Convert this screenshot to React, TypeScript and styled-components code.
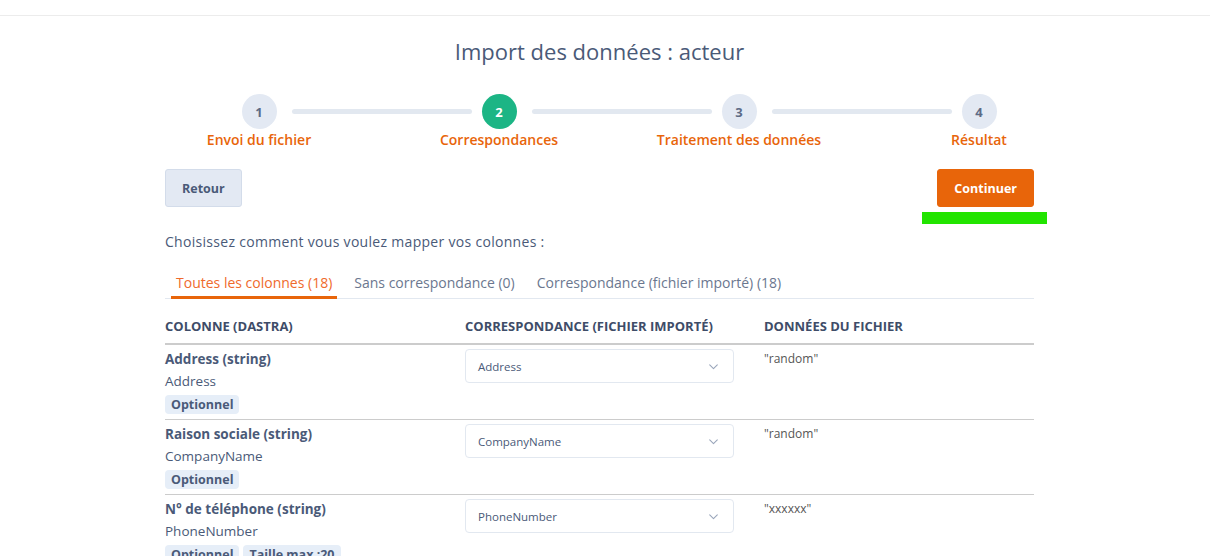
import React from 'react'
import styled, { createGlobalStyle } from 'styled-components'

const GlobalStyle = createGlobalStyle`
  * { box-sizing: border-box; }
  html, body { margin: 0; padding: 0; background: #fff; }
  body {
    font-family: "Open Sans", "Noto Sans", sans-serif;
    color: #4a5a78;
    overflow: hidden;
  }
`

const colors = {
  text: '#4a5a78',
  heading: '#3e4c68',
  orange: '#e8650a',
  tabOrange: '#ef6a2c',
  green: '#1cb585',
  muted: '#e3e9f3',
  border: '#cccccc',
  light: '#e2e8f0',
}

const TopBar = styled.div`
  height: 16px;
  border-bottom: 1px solid #ececec;
`

const Page = styled.main`
  width: 869px;
  margin-left: 165px;
  padding-top: 21px;
`

const Title = styled.h1`
  margin: 0;
  text-align: center;
  font-size: 22px;
  font-weight: 400;
  line-height: 28px;
  color: ${colors.text};
`

const Stepper = styled.ol`
  list-style: none;
  margin: 29px 0 0 -26px;
  padding: 0;
  display: grid;
  grid-template-columns: repeat(4, 240px);
`

const Step = styled.li<{ $last?: boolean }>`
  position: relative;
  display: flex;
  flex-direction: column;
  align-items: center;

  &::after {
    content: '';
    display: ${({ $last }) => ($last ? 'none' : 'block')};
    position: absolute;
    top: 15px;
    left: 153px;
    width: 180px;
    height: 5px;
    border-radius: 3px;
    background: ${colors.light};
  }
`

const Circle = styled.span<{ $active?: boolean }>`
  width: 35px;
  height: 35px;
  border-radius: 50%;
  display: flex;
  align-items: center;
  justify-content: center;
  font-size: 13px;
  font-weight: 700;
  background: ${({ $active }) => ($active ? colors.green : colors.muted)};
  color: ${({ $active }) => ($active ? '#fff' : '#5d6b86')};
`

const StepLabel = styled.span`
  margin-top: 1px;
  font-size: 14px;
  font-weight: 600;
  line-height: 20px;
  color: ${colors.orange};
  white-space: nowrap;
`

const Actions = styled.div`
  display: flex;
  justify-content: space-between;
  align-items: flex-start;
  margin-top: 19px;
`

const Button = styled.button<{ $primary?: boolean }>`
  height: 38px;
  padding: 0 16px;
  border-radius: 3px;
  font-family: inherit;
  font-size: 12.5px;
  font-weight: 700;
  cursor: pointer;
  border: 1px solid ${({ $primary }) => ($primary ? colors.orange : '#d3dcea')};
  background: ${({ $primary }) => ($primary ? colors.orange : colors.muted)};
  color: ${({ $primary }) => ($primary ? '#fff' : colors.text)};
`

const PrimaryWrap = styled.div`
  position: relative;
`

const Highlight = styled.span`
  position: absolute;
  top: 43px;
  left: -15px;
  width: 125px;
  height: 12px;
  background: #22e400;
`

const Intro = styled.p`
  margin: 25px 0 0;
  font-size: 14px;
  letter-spacing: 0.3px;
  line-height: 20px;
  color: ${colors.text};
`

const Tabs = styled.div`
  display: flex;
  margin-top: 21px;
  border-bottom: 1px solid ${colors.light};
`

const Tab = styled.button<{ $active?: boolean }>`
  margin: 0 6px -1px;
  padding: 0 5px 3px;
  border: 0;
  background: none;
  font-family: inherit;
  font-size: 14px;
  line-height: 20px;
  cursor: pointer;
  color: ${({ $active }) => ($active ? colors.tabOrange : '#6b778f')};
  border-bottom: 3px solid ${({ $active }) => ($active ? colors.orange : 'transparent')};
`

const Table = styled.table`
  width: 100%;
  margin-top: 17px;
  border-collapse: collapse;
  table-layout: fixed;
`

const Th = styled.th<{ $w: number }>`
  width: ${({ $w }) => $w}px;
  padding: 0 0 7px;
  text-align: left;
  font-size: 13px;
  font-weight: 700;
  line-height: 20px;
  text-transform: uppercase;
  color: ${colors.heading};
  border-bottom: 2px solid ${colors.border};
`

const Tr = styled.tr`
  border-bottom: 1px solid ${colors.border};
`

const Td = styled.td`
  vertical-align: top;
  padding: 4px 0 5px;
`

const FieldName = styled.div`
  font-size: 13.5px;
  font-weight: 700;
  line-height: 20px;
  color: ${colors.text};
`

const FieldKey = styled.div`
  font-size: 13.5px;
  line-height: 24px;
  color: ${colors.text};
`

const Badges = styled.div`
  display: flex;
  gap: 4px;
  margin-top: 2px;
`

const Badge = styled.span`
  display: inline-block;
  padding: 0 6px;
  height: 19px;
  line-height: 19px;
  border-radius: 4px;
  background: #e6eef8;
  font-size: 12.5px;
  font-weight: 700;
  color: ${colors.text};
`

const Select = styled.div`
  width: 269px;
  height: 34px;
  display: flex;
  align-items: center;
  justify-content: space-between;
  padding: 0 13px 0 12px;
  border: 1px solid ${colors.light};
  border-radius: 4px;
  font-size: 11.5px;
  color: ${colors.text};
`

const DataValue = styled.div`
  font-size: 12px;
  line-height: 20px;
  color: #555;
`

const Chevron = () => (
  <svg width="13" height="13" viewBox="0 0 24 24" fill="none" stroke="#9aa6bb" strokeWidth="2" strokeLinecap="round" strokeLinejoin="round">
    <path d="M5 9l7 7 7-7" />
  </svg>
)

const steps = ['Envoi du fichier', 'Correspondances', 'Traitement des données', 'Résultat']

const rows = [
  { name: 'Address (string)', key: 'Address', badges: ['Optionnel'], value: '"random"' },
  { name: 'Raison sociale (string)', key: 'CompanyName', badges: ['Optionnel'], value: '"random"' },
  { name: 'N° de téléphone (string)', key: 'PhoneNumber', badges: ['Optionnel', 'Taille max :20'], value: '"xxxxxx"' },
]

export default function App() {
  return (
    <>
      <GlobalStyle />
      <TopBar />
      <Page>
        <Title>Import des données : acteur</Title>
        <Stepper>
          {steps.map((label, i) => (
            <Step key={label} $last={i === steps.length - 1}>
              <Circle $active={i === 1}>{i + 1}</Circle>
              <StepLabel>{label}</StepLabel>
            </Step>
          ))}
        </Stepper>
        <Actions>
          <Button>Retour</Button>
          <PrimaryWrap>
            <Button $primary>Continuer</Button>
            <Highlight />
          </PrimaryWrap>
        </Actions>
        <Intro>Choisissez comment vous voulez mapper vos colonnes :</Intro>
        <Tabs>
          <Tab $active>Toutes les colonnes (18)</Tab>
          <Tab>Sans correspondance (0)</Tab>
          <Tab>Correspondance (fichier importé) (18)</Tab>
        </Tabs>
        <Table>
          <thead>
            <tr>
              <Th $w={300}>Colonne (Dastra)</Th>
              <Th $w={299}>Correspondance (fichier importé)</Th>
              <Th $w={270}>Données du fichier</Th>
            </tr>
          </thead>
          <tbody>
            {rows.map((r) => (
              <Tr key={r.key}>
                <Td>
                  <FieldName>{r.name}</FieldName>
                  <FieldKey>{r.key}</FieldKey>
                  <Badges>
                    {r.badges.map((b) => (
                      <Badge key={b}>{b}</Badge>
                    ))}
                  </Badges>
                </Td>
                <Td>
                  <Select>
                    <span>{r.key}</span>
                    <Chevron />
                  </Select>
                </Td>
                <Td>
                  <DataValue>{r.value}</DataValue>
                </Td>
              </Tr>
            ))}
          </tbody>
        </Table>
      </Page>
    </>
  )
}
